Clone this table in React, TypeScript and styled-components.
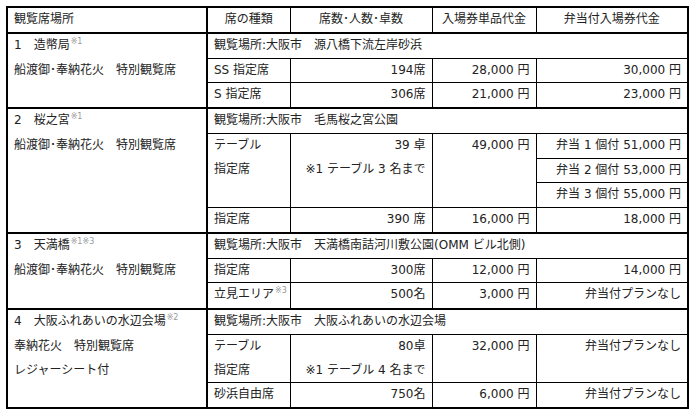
import React from 'react';
import styled, { createGlobalStyle } from 'styled-components';

const GlobalStyle = createGlobalStyle`
  body {
    margin: 0;
    background: #fff;
  }
`;

const Page = styled.div`
  padding: 6px 0 0 6px;
`;

const Table = styled.table`
  border-collapse: collapse;
  table-layout: fixed;
  width: 681px;
  border: 2px solid #000;
  font-family: 'DejaVu Sans', 'Noto Sans CJK JP', sans-serif;
  font-size: 12px;
  color: #222;
`;

const Head = styled.thead`
  border-bottom: 2px solid #000;
`;

const Group = styled.tbody`
  border-top: 2px solid #000;
`;

const Th = styled.th<{ left?: boolean }>`
  font-weight: normal;
  text-align: ${({ left }) => (left ? 'left' : 'center')};
  line-height: 23.75px;
  padding: 0 6px;
  border: 1px solid #000;
`;

const PlaceTh = styled(Th)`
  border-right: 2px solid #000;
`;

const Cell = styled.td<{ align?: 'left' | 'right' }>`
  text-align: ${({ align }) => align ?? 'left'};
  vertical-align: top;
  line-height: 23.75px;
  padding: 0 6px;
  border: 1px solid #000;
  white-space: nowrap;
`;

const PlaceCell = styled(Cell)`
  border-right: 2px solid #000;
`;

const Line = styled.div`
  line-height: 23.75px;
`;

const Note = styled.span`
  font-size: 8px;
  color: #999;
  position: relative;
  top: -5px;
  margin-left: 1px;
`;

export default function App() {
  return (
    <Page>
      <GlobalStyle />
      <Table>
        <colgroup>
          <col style={{ width: 200 }} />
          <col style={{ width: 83 }} />
          <col style={{ width: 142 }} />
          <col style={{ width: 104 }} />
          <col style={{ width: 152 }} />
        </colgroup>
        <Head>
          <tr>
            <PlaceTh left>観覧席場所</PlaceTh>
            <Th>席の種類</Th>
            <Th>席数･人数･卓数</Th>
            <Th>入場券単品代金</Th>
            <Th>弁当付入場券代金</Th>
          </tr>
        </Head>

        <Group>
          <tr>
            <PlaceCell rowSpan={3}>
              <Line>
                1　造幣局<Note>※1</Note>
              </Line>
              <Line>船渡御･奉納花火　特別観覧席</Line>
            </PlaceCell>
            <Cell colSpan={4}>観覧場所:大阪市　源八橋下流左岸砂浜</Cell>
          </tr>
          <tr>
            <Cell>SS 指定席</Cell>
            <Cell align="right">194席</Cell>
            <Cell align="right">28,000 円</Cell>
            <Cell align="right">30,000 円</Cell>
          </tr>
          <tr>
            <Cell>S 指定席</Cell>
            <Cell align="right">306席</Cell>
            <Cell align="right">21,000 円</Cell>
            <Cell align="right">23,000 円</Cell>
          </tr>
        </Group>

        <Group>
          <tr>
            <PlaceCell rowSpan={5}>
              <Line>
                2　桜之宮<Note>※1</Note>
              </Line>
              <Line>船渡御･奉納花火　特別観覧席</Line>
            </PlaceCell>
            <Cell colSpan={4}>観覧場所:大阪市　毛馬桜之宮公園</Cell>
          </tr>
          <tr>
            <Cell rowSpan={3}>
              <Line>テーブル</Line>
              <Line>指定席</Line>
            </Cell>
            <Cell rowSpan={3} align="right">
              <Line>39 卓</Line>
              <Line>※1 テーブル 3 名まで</Line>
            </Cell>
            <Cell rowSpan={3} align="right">
              49,000 円
            </Cell>
            <Cell align="right">弁当 1 個付 51,000 円</Cell>
          </tr>
          <tr>
            <Cell align="right">弁当 2 個付 53,000 円</Cell>
          </tr>
          <tr>
            <Cell align="right">弁当 3 個付 55,000 円</Cell>
          </tr>
          <tr>
            <Cell>指定席</Cell>
            <Cell align="right">390 席</Cell>
            <Cell align="right">16,000 円</Cell>
            <Cell align="right">18,000 円</Cell>
          </tr>
        </Group>

        <Group>
          <tr>
            <PlaceCell rowSpan={3}>
              <Line>
                3　天満橋<Note>※1※3</Note>
              </Line>
              <Line>船渡御･奉納花火　特別観覧席</Line>
            </PlaceCell>
            <Cell colSpan={4}>観覧場所:大阪市　天満橋南詰河川敷公園(OMM ビル北側)</Cell>
          </tr>
          <tr>
            <Cell>指定席</Cell>
            <Cell align="right">300席</Cell>
            <Cell align="right">12,000 円</Cell>
            <Cell align="right">14,000 円</Cell>
          </tr>
          <tr>
            <Cell>
              立見エリア<Note>※3</Note>
            </Cell>
            <Cell align="right">500名</Cell>
            <Cell align="right">3,000 円</Cell>
            <Cell align="right">弁当付プランなし</Cell>
          </tr>
        </Group>

        <Group>
          <tr>
            <PlaceCell rowSpan={3}>
              <Line>
                4　大阪ふれあいの水辺会場<Note>※2</Note>
              </Line>
              <Line>奉納花火　特別観覧席</Line>
              <Line>レジャーシート付</Line>
            </PlaceCell>
            <Cell colSpan={4}>観覧場所:大阪市　大阪ふれあいの水辺会場</Cell>
          </tr>
          <tr>
            <Cell>
              <Line>テーブル</Line>
              <Line>指定席</Line>
            </Cell>
            <Cell align="right">
              <Line>80卓</Line>
              <Line>※1 テーブル 4 名まで</Line>
            </Cell>
            <Cell align="right">32,000 円</Cell>
            <Cell align="right">弁当付プランなし</Cell>
          </tr>
          <tr>
            <Cell>砂浜自由席</Cell>
            <Cell align="right">750名</Cell>
            <Cell align="right">6,000 円</Cell>
            <Cell align="right">弁当付プランなし</Cell>
          </tr>
        </Group>
      </Table>
    </Page>
  );
}
